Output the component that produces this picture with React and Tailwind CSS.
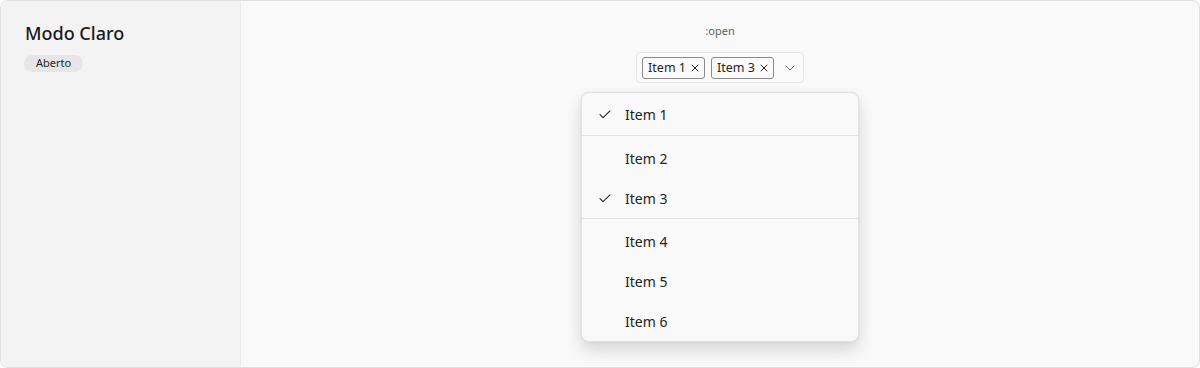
import { useState } from 'react'

const items = [
  ['Item 1'],
  ['Item 2', 'Item 3'],
  ['Item 4', 'Item 5', 'Item 6'],
]

function CheckMark() {
  return (
    <svg width="12" height="9" viewBox="0 0 12 9" fill="none" stroke="#242424" strokeWidth="1.1" strokeLinecap="round" strokeLinejoin="round">
      <path d="M1 4.6 L4.1 7.7 L11 0.9" />
    </svg>
  )
}

function Dismiss() {
  return (
    <svg width="8" height="8" viewBox="0 0 8 8" fill="none" stroke="#242424" strokeWidth="1" strokeLinecap="round">
      <path d="M1 1 L7 7 M7 1 L1 7" />
    </svg>
  )
}

function Chevron() {
  return (
    <svg width="10" height="6" viewBox="0 0 10 6" fill="none" stroke="#707070" strokeWidth="1" strokeLinecap="round" strokeLinejoin="round">
      <path d="M1 1 L5 5 L9 1" />
    </svg>
  )
}

function Tag({ label }) {
  return (
    <span className="inline-flex h-[22px] items-center gap-[5px] rounded-[3px] border border-[#8a8a8a] pl-[5px] pr-[5px] pt-px text-[12.5px] text-[#242424]">
      {label}
      <Dismiss />
    </span>
  )
}

export default function App() {
  const [selected] = useState(['Item 1', 'Item 3'])

  return (
    <div
      className="flex h-[368px] w-[1200px] overflow-hidden rounded-lg border border-[#e0e0e0] bg-[#f9f9f9]"
      style={{ fontFamily: '"Noto Sans", "Open Sans", sans-serif' }}
    >
      <aside className="w-[240px] shrink-0 border-r border-[#ececec] bg-[#f3f3f3] px-6 pt-5">
        <h1 className="text-[18px] font-medium leading-6 text-[#1a1a1a]">Modo Claro</h1>
        <span className="mt-[10px] -ml-px inline-flex h-[17px] items-center rounded-full bg-[#e6e6e6] px-3 text-[11px] text-[#242424]">
          Aberto
        </span>
      </aside>

      <main className="flex flex-1 flex-col items-center pt-[23px]">
        <p className="text-[11px] leading-[14px] text-[#616161]">:open</p>

        <div className="mt-[14px] flex h-[31px] items-center gap-[6px] rounded border border-[#e6e6e6] bg-[#fbfbfb] pl-[5px] pr-[8px]">
          {selected.map((s) => (
            <Tag key={s} label={s} />
          ))}
          <span className="ml-[5px] flex items-center">
            <Chevron />
          </span>
        </div>

        <div className="mt-[9px] w-[278px] rounded-lg border border-[#e3e3e3] bg-[#f9f9f9] shadow-[0_8px_16px_rgba(0,0,0,0.14),0_0_2px_rgba(0,0,0,0.1)]">
          {items.map((group, gi) => (
            <div key={gi} className={gi > 0 ? 'border-t border-[#e3e3e3] pt-[2px]' : 'py-px'}>
              {group.map((it) => (
                <div key={it} className="flex h-10 items-center text-[14px] text-[#242424]">
                  <span className="flex w-[43px] justify-end pr-[14px]">
                    {selected.includes(it) && <CheckMark />}
                  </span>
                  {it}
                </div>
              ))}
            </div>
          ))}
        </div>
      </main>
    </div>
  )
}
